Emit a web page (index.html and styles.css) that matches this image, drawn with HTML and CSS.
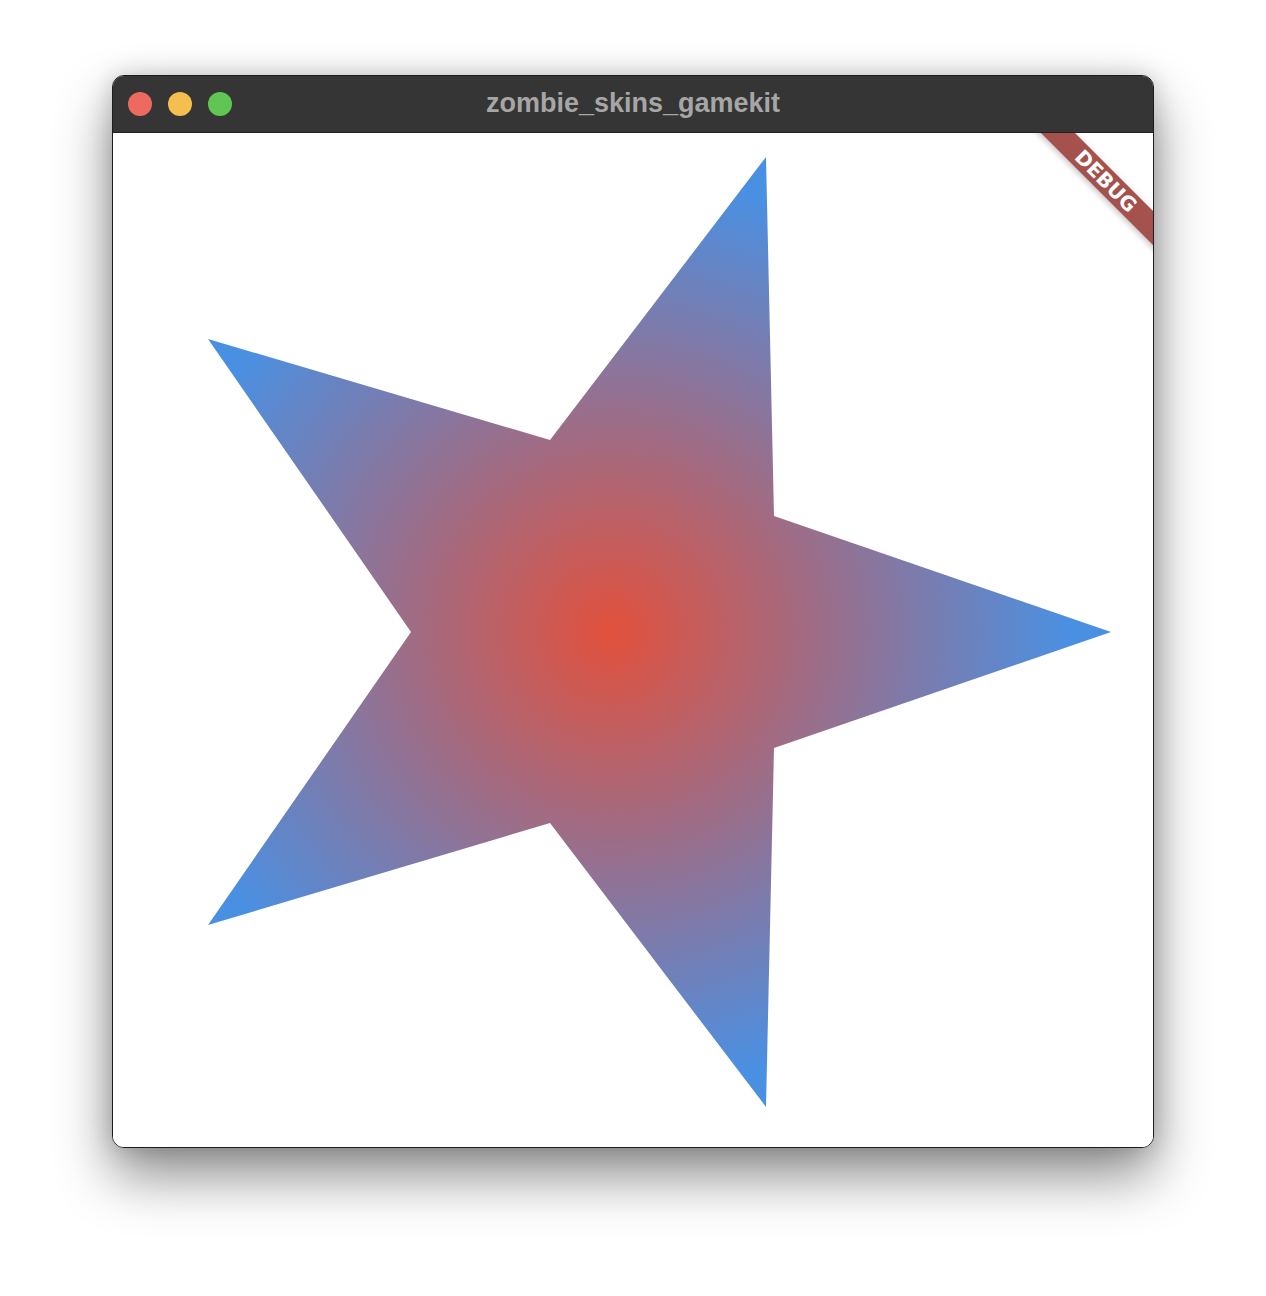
FILE: index.html
```html
<!DOCTYPE html>
<html>
<head>
<meta charset="utf-8">
<link rel="stylesheet" href="styles.css">
</head>
<body>
<div class="window">
  <div class="titlebar">
    <div class="lights">
      <span class="light red"></span>
      <span class="light yellow"></span>
      <span class="light green"></span>
    </div>
    <div class="title">zombie_skins_gamekit</div>
  </div>
  <div class="content">
    <svg class="star" width="1040" height="1014" viewBox="113 133 1040 1014" xmlns="http://www.w3.org/2000/svg">
      <defs>
        <radialGradient id="g" gradientUnits="userSpaceOnUse" cx="611.7" cy="632" r="460">
          <stop offset="0" stop-color="#e2503c"/>
          <stop offset="1" stop-color="#4a90e2"/>
        </radialGradient>
      </defs>
      <polygon fill="url(#g)" points="1111,632 774,516 766,157 550,440 208,339 411,632 208,925 550,823 766,1107 774,748"/>
    </svg>
    <div class="banner">DEBUG</div>
  </div>
</div>
</body>
</html>
```
FILE: styles.css
```css
html, body {
  margin: 0;
  padding: 0;
  background: #ffffff;
}
body {
  display: flex;
  align-items: flex-start;
  padding: 75px 0 0 112px;
  height: 1296px;
  box-sizing: border-box;
  overflow: hidden;
}
.window {
  width: 1042px;
  height: 1073px;
  box-sizing: border-box;
  border: 1px solid #1c1c1c;
  border-radius: 12px;
  overflow: hidden;
  display: flex;
  flex-direction: column;
  background: #fff;
  box-shadow: 0 28px 55px rgba(0,0,0,0.45), 0 0 24px rgba(0,0,0,0.18);
}
.titlebar {
  height: 57px;
  flex: none;
  background: #353535;
  display: flex;
  align-items: center;
  position: relative;
  box-sizing: border-box;
  border-bottom: 1px solid #222;
}
.lights {
  display: flex;
  gap: 16px;
  padding-left: 15px;
}
.light {
  width: 24px;
  height: 24px;
  border-radius: 50%;
  display: block;
}
.red { background: #ed6a5e; }
.yellow { background: #f5bf4f; }
.green { background: #61c554; }
.title {
  position: absolute;
  left: 0;
  right: 0;
  top: 0;
  bottom: 0;
  display: flex;
  align-items: center;
  justify-content: center;
  font-family: "Liberation Sans", Arial, sans-serif;
  font-weight: bold;
  font-size: 27px;
  color: #a6a6a6;
  padding-bottom: 1px;
}
.content {
  flex: 1;
  position: relative;
  overflow: hidden;
  background: #fff;
}
.star {
  display: block;
}
.banner {
  position: absolute;
  top: 36px;
  right: -53px;
  width: 200px;
  height: 24px;
  background: #a5524f;
  color: #fff;
  font-family: "DejaVu Sans", Arial, sans-serif;
  font-weight: bold;
  font-size: 20px;
  line-height: 24px;
  text-align: center;
  transform: rotate(45deg);
  box-shadow: 0 2px 6px rgba(0,0,0,0.25);
}
```
